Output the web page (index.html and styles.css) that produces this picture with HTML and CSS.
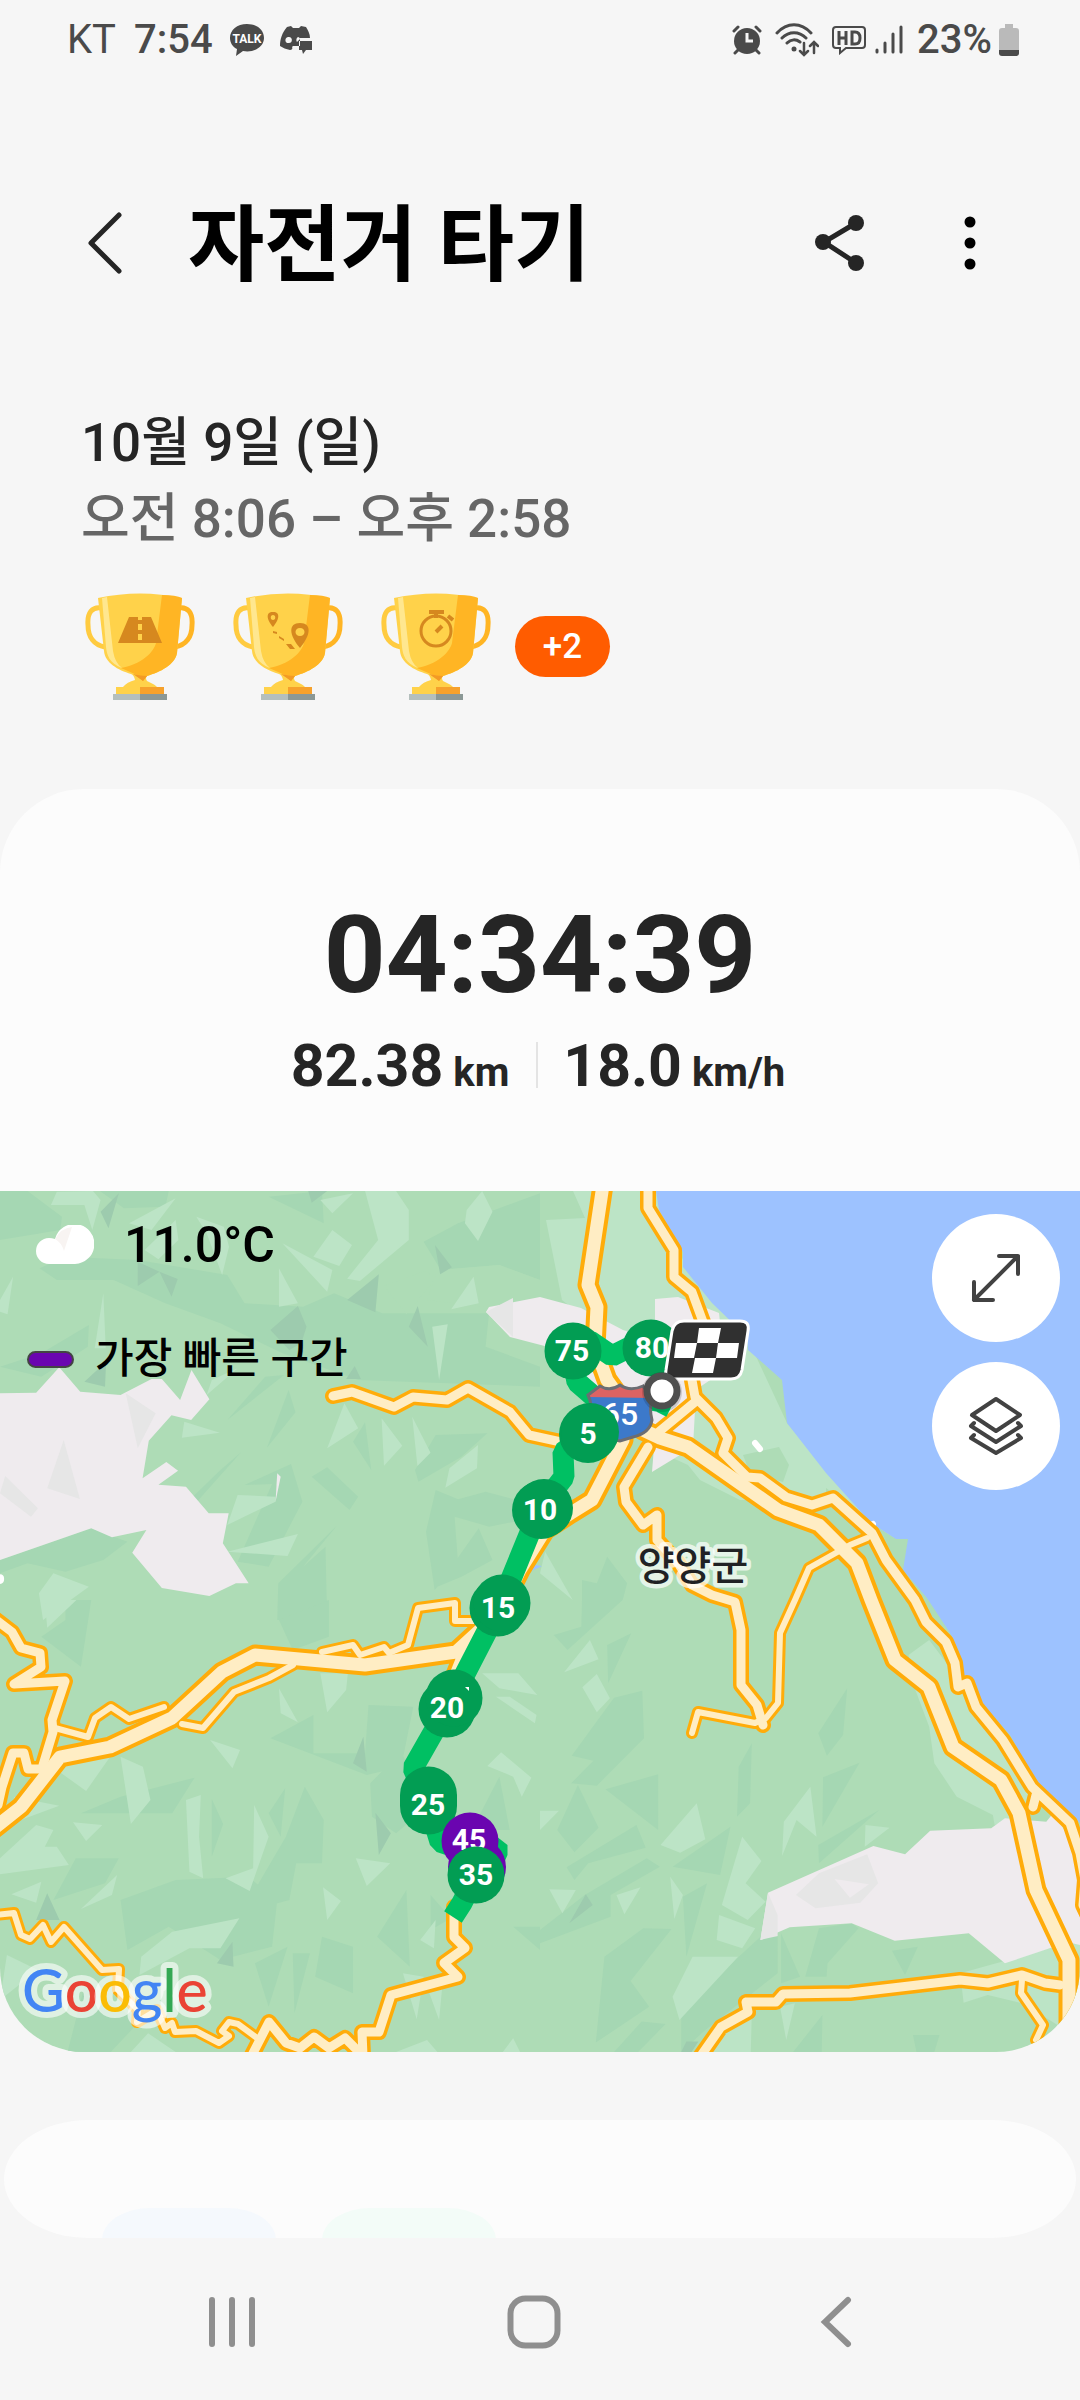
FILE: index.html
```html
<!DOCTYPE html>
<html lang="ko">
<head>
<meta charset="utf-8">
<meta name="viewport" content="width=device-width, initial-scale=1">
<title>자전거 타기</title>
<link rel="stylesheet" href="styles.css">
</head>
<body>
<div class="status">
  <div class="status-side">
    <span class="carrier">KT</span>
    <span class="clock">7:54</span>
    <svg class="talk" width="36" height="33" viewBox="0 0 36 33"><path fill="#4a4a4a" d="M18 0C8 0 1 6 1 14c0 5 3 9 7 11l-1 7 7-5c11 2 21-4 21-13C35 6 28 0 18 0z"/><text x="18" y="19" class="talk-text">TALK</text></svg>
    <svg width="34" height="30" viewBox="0 0 34 30"><path fill="#4a4a4a" fill-rule="evenodd" d="M8 2l4-1 2 2h6l2-2 5 1c2 3 4 7 4 11H21v8h-7l-1 1c1 1 0 3-2 3-4-1-7-2-10-4C1 14 3 8 8 2zM9 12c-4 1-3 7 1 6 4 0 4-7-1-6zm10 0c-2 1-2 4-1 5l3-3c0-1-1-2-2-2zM20 16h13v9h-6l-3 4-1-4h-3z"/></svg>
  </div>
  <div class="status-side status-right">
    <svg width="30" height="30" viewBox="0 0 30 30"><circle cx="15" cy="16" r="13" fill="#4a4a4a"/><path fill="none" stroke="#4a4a4a" stroke-width="3" stroke-linecap="round" d="M2 6l4-4M28 6l-4-4M6 25l-3 3M24 25l3 3"/><path fill="none" stroke="#f6f6f6" stroke-width="3" d="M15 8v8h6"/></svg>
    <svg class="wifi" width="44" height="34" viewBox="0 0 44 34"><g fill="none" stroke="#4a4a4a" stroke-width="3" stroke-linecap="round"><path d="M2 10C12-1 26-1 36 10M7 15c7-7 17-7 24 0M12 20c4-4 9-4 13-1"/><path d="M29 20v11M25 28l4 4 4-4M39 30V20M35 23l4-4 4 4" stroke-width="2.500"/></g><circle cx="19" cy="26" r="2.500" fill="#4a4a4a"/></svg>
    <svg class="hd" width="36" height="30" viewBox="0 0 36 30"><path fill="none" stroke="#4a4a4a" stroke-width="2" d="M5 2h26q3 0 3 3v15q0 3-3 3H15l-6 5v-5H5q-3 0-3-3V5q0-3 3-3z"/><path fill="none" stroke="#4a4a4a" stroke-width="3" d="M8 6v14M8 13h6M15 6v14M21 7v12h3q5 0 5-6t-5-6z"/></svg>
    <svg class="signal" width="28" height="30" viewBox="0 0 28 30"><path stroke="#4a4a4a" stroke-width="3" stroke-linecap="round" d="M2 25v2M10 18v9M18 9v18M26 2v25"/></svg>
    <span class="clock">23%</span>
    <svg class="battery" width="22" height="32" viewBox="0 0 22 32"><path fill="#bababa" d="M7 0h8v4h3q3 0 3 3v21q0 3-3 3H4q-3 0-3-3V7q0-3 3-3h3z"/><path fill="#4a4a4a" d="M1 26h20v3q0 3-3 3H4q-3 0-3-3z"/></svg>
  </div>
</div>

<header class="header">
  <button class="icon-button" aria-label="뒤로"><svg width="40" height="64" viewBox="0 0 40 64"><path fill="none" stroke="#252525" stroke-width="5" stroke-linecap="round" stroke-linejoin="round" d="M35 4L7 32l28 28"/></svg></button>
  <h1>자전거 타기</h1>
  <button class="icon-button share" aria-label="공유"><svg width="52" height="60" viewBox="0 0 52 60"><path fill="none" stroke="#252525" stroke-width="5" d="M42 10L10 29l32 21"/><g fill="#252525"><circle cx="42" cy="10" r="8"/><circle cx="9" cy="29" r="8"/><circle cx="42" cy="50" r="8"/></g></svg></button>
  <button class="icon-button more" aria-label="더보기"><svg width="12" height="56" viewBox="0 0 12 56"><circle cx="6" cy="7" r="5.500"/><circle cx="6" cy="28" r="5.500"/><circle cx="6" cy="49" r="5.500"/></svg></button>
</header>

<main>
  <section class="summary">
    <p class="date">10월 9일 (일)</p>
    <p class="hours">오전 8:06 – 오후 2:58</p>
    <div class="awards">
      <svg width="0" height="0" class="defs"><defs>
        <g id="cup">
          <path fill="none" stroke="#ffcb40" stroke-width="5" d="M17 15C7 13 2 20 3 32c0 12 6 20 17 22"/>
          <path fill="none" stroke="#ffb524" stroke-width="5" d="M93 15c10-2 15 5 14 17 0 12-6 20-17 22"/>
          <path fill="#ffd24a" d="M13 5q42-9 84 0l-5 55C90 72 75 79 62 83q-2 2 0 5 9 4 10 6H38q4-5 12-7-1-5-4-6C33 77 20 70 19 58z"/>
          <path fill="#ffb524" d="M77 2q14 0 20 3l-5 55C90 72 75 79 62 83l-4 5-6-6-16-7C62 70 70 55 71 50z"/>
          <path fill="#ffe78f" d="M17 5l5-1 6 54q2 12 9 17C24 70 22 62 21 54z"/>
          <path fill="#f39a25" d="M48 81q8 2 14 2l-4 5z"/>
          <path fill="#ffd24a" d="M31 94h24v8H31z"/><path fill="#f6a12c" d="M55 94h24v8H55z"/>
          <path fill="#b4bfbd" d="M28 101h27v6H28z"/><path fill="#8b9896" d="M55 101h27v6H55z"/>
        </g>
      </defs></svg>
      <svg class="cup" width="110" height="107" viewBox="0 0 110 107"><use href="#cup"/><path fill="#d6881f" d="M44 24h9v3h4v-3h9l11 26H33zM53 31h4v6h-4zM53 41h4v6h-4z" fill-rule="evenodd"/></svg>
      <svg class="cup" width="110" height="107" viewBox="0 0 110 107"><use href="#cup"/><g fill="#d6881f"><path fill-rule="evenodd" d="M40 19c-8 0-6 8 0 15 6-7 8-15 0-15zM40 22c3 0 3 5 0 5s-3-5 0-5zM67 30c-12 0-11 12 0 25 11-13 12-25 0-25zM67 35c6 0 6 8 0 8s-6-8 0-8z"/><path d="M40 38l4 1v2l-4-1zM46 43l5 3v2l-5-3zM53 51h5l4 5h-5z"/></g></svg>
      <svg class="cup" width="110" height="107" viewBox="0 0 110 107"><use href="#cup"/><g fill="none" stroke="#d6881f"><circle cx="55" cy="38" r="15" stroke-width="3"/><path stroke-width="4" d="M48 19h15M55 20v5M67 23l5 4M55 39l6-6"/></g></svg>
      <button class="more-awards">+2</button>
    </div>
  </section>

  <section class="workout">
    <div class="totals">
      <p class="duration">04:34:39</p>
      <div class="stats">
        <p>82.38<small>km</small></p>
        <p>18.0<small>km/h</small></p>
      </div>
    </div>
    <div class="map">
      <svg class="map-canvas" viewBox="0 1191 1080 861" role="img" aria-label="경로 지도">
        <rect y="1191" width="1080" height="861" fill="#aedcb6"/>
        <!-- terrain, north-west -->
        <g transform="translate(0 1180) scale(.3444 .3333)">
          <path fill="#a5d7b3" d="M0 33H80L180 110 175 150 0 180zM115 265L190 230 400 240 660 285 710 370 880 380 970 340 1110 400H1420L1410 500 1568 560V620L1040 600 820 520 640 430 480 370 330 300H165zM1330 130L1568 40V300L1450 255 1280 270 1230 185zM780 50L935 33 940 130zM290 33H490L480 80 360 85zM825 585L770 590 660 720zM838 630L858 697 775 803zM700 817L555 985 560 950 640 870zM845 852L878 965 780 1160 690 1145 790 912 710 915zM950 862L1040 950 1015 990 905 890zM1060 727L1078 870 1025 785zM1265 930L1330 958 1410 935 1568 980V1010L1420 1040 1320 1010 1330 1150 1262 1230 1237 1055zM1415 760L1340 830 1215 905 1205 870 1265 765zM978 1037L880 1160 945 1100 950 1320H805L808 1210zM0 1140L265 1045 370 1085 300 1140 190 1175 80 1150 0 1180zM0 560L120 520 258 435 255 500 120 590zM1390 1045L1430 1140 1340 1190 1270 1220z"/>
          <path fill="#aedcb6" d="M1115 318L1235 272 1265 295 1180 403zM1270 270L1450 255 1568 300V400L1240 360z"/>
          <path fill="#bce4c6" d="M1060 33H1150L1187 90V180L1045 303 1008 296 1098 180zM148 75L165 35 270 33 292 60 268 150 245 75zM375 130L510 55 440 150zM570 110L650 140 665 200 645 285 600 160zM820 190L965 270 950 335zM965 150L1022 195 985 258 910 230zM930 60L1025 40 965 100zM810 265L865 370 810 380zM1400 33L1430 95 1388 183 1350 130 1355 90zM1375 290L1390 370 1310 388zM300 340L307 505H275zM38 290L22 403 0 395V360zM420 210L510 120 518 180 460 238zM1000 670L1040 745 950 805zM1108 715L1168 797 1115 857zM1197 710L1250 818 1212 858zM1388 795L1385 865 1293 923 1305 865zM535 725L638 758 528 773zM690 945L800 950V965L660 1035zM865 1062L835 1128 660 1115zM155 1180L258 1220 125 1320 113 1240zM690 565L600 645 615 600zM1300 433L1275 600 1255 440z"/>
          <path fill="#9dcbae" d="M345 40L315 145 292 95zM400 245L463 275 400 318zM463 275L516 297 498 350zM865 378L890 440 875 490 840 510 785 450zM1100 283L1090 397 1008 360zM1263 195L1312 262 1278 283zM1213 378L1242 500 1187 440zM308 545L305 620 245 605zM1030 558L1048 597H1005zM895 33H950L905 68z"/>
          <path fill="#efebee" d="M0 640L105 638 172 562 233 635 350 645 440 597H470L523 660 556 570 608 658 555 720 498 706 432 782 414 895 483 846 517 872 460 914 540 920 606 1000H664L647 1090 722 1210H685L608 1248 470 1224 384 1118 425 1050 325 1072 265 1045 0 1140z"/>
          <path fill="#e6e6e6" d="M365 640L452 700 400 805zM185 780L232 957 137 925zM15 888L110 985 90 1010 0 940z"/>
          <path fill="#efebee" d="M805 880L815 890 800 965z"/>
          <path fill="#fff" d="M0 1183q12 0 12 14T0 1212z"/>
        </g>
        <!-- terrain, south-west -->
        <g transform="translate(0 1600) scale(.3444 .3333)">
          <path fill="#a5d7b3" d="M120 110L190 60V0H265L235 200zM785 415L910 345V460H1060L1070 315 1200 320 1165 500 1065 525zM350 590L565 533 500 640H235zM220 775H345L305 850 155 900zM510 840L720 830 805 900 790 1040 640 1080 490 980 370 1050 350 900zM885 560L940 660 935 790H860L840 900 700 940 830 710zM780 640L828 565 815 710zM615 597L648 672 615 770zM1180 870L1095 1010 1190 1100zM1250 885L1310 955 1250 990zM1450 530L1480 690H1370zM935 1010L1025 1040V1180L915 1130zM740 1090L835 1040 780 1220zM850 1060H900L855 1240zM190 1380L250 1140 400 1270 300 1380zM1075 550L1165 455 1240 620 1150 700 1080 650zM810 60L955 0V110L850 150zM1490 980H1568V1050z"/>
          <path fill="#bce4c6" d="M350 470L415 500 437 600 380 672zM540 600L583 585 578 710 590 835 550 815zM738 615L780 710 725 873 655 835 735 805zM212 667L297 675 250 723zM610 420L697 450 675 505zM810 265L865 367 815 340zM930 220H1010L1005 270 950 337zM1033 775L1133 790 1065 858zM938 862L990 903 950 960zM1455 457L1543 533 1515 590 1490 530 1415 498zM1400 220H1505L1560 285 1450 265zM1440 290H1480L1558 345 1553 370zM695 955L640 1045H550L405 1125 410 1070 500 995zM165 510L300 455H330L250 573zM40 590L172 617 60 660zM0 775L105 675 155 690 130 740H165L200 795 0 823zM120 845L105 908 33 883zM340 825L325 885 235 927zM1265 960L1260 1045 1220 1020zM1170 1120L1230 1130 1210 1258zM1240 1160L1285 1150 1275 1260zM130 0H222L137 83zM20 1065L110 1110 0 1200zM1150 1356L1240 1320 1270 1356zM1490 1315L1510 1356H1460zM430 1300L510 1356H380z"/>
          <path fill="#9dcbae" d="M1055 410L1065 515 1025 490zM1090 638L1135 700 1100 765zM137 880L173 960H105zM675 1025L678 1100 630 1090z"/>
        </g>
        <!-- terrain, south-east -->
        <g transform="translate(540 1600) scale(.3444 .3333)">
          <path fill="#a5d7b3" d="M215 293L297 272 302 415 165 557 90 550 155 482 92 467zM110 555L170 683 100 757 50 690zM190 568L343 523V690zM280 675L307 743 140 790 100 840 77 802zM553 680L523 825 385 800zM310 775L348 800 205 885V950L0 1030V990L130 885zM485 850L425 1070 415 890zM892 265L880 405 833 467 808 400zM928 488L820 680 822 532zM615 430L610 610 572 650 577 500zM985 630L810 790 808 735zM300 985L382 987 263 1143 317 1220 162 1328 187 1070zM905 970L925 985 835 1090 832 1130H770L810 985zM700 1000L755 1130 700 1150zM1022 1052L1097 1040 1060 1125zM265 100L198 250 195 135zM40 105L120 80 122 0 122-60 165-50 195-130 253-50 240 0 80 150zM410 1230L640 1010H690V1120L480 1290 410 1356zM820 1245L818 1356H735zM1083 1305H1160L1145 1356H1093zM295 1265L365 1272 285 1356H215z"/>
          <path fill="#bce4c6" d="M145 120L170 178 70 217zM165 222L203 295 165 337 123 262zM455 610L480 718 407 758 350 735zM785 560L803 710 745 660 703 768 708 665zM945 675L1015 683 943 740zM587 710L643 783 597 850 655 905 603 960 528 915zM520 945L625 985 587 1045 513 1020zM27 868L104 870 65 940zM292 862L245 943 222 885zM378 830L415 885 390 957zM443 1070H575L405 1260 385 1190zM0 632H55L0 690zM697 1220L740 1210 715 1320zM530 1300L615 1240 612 1356H500zM1070 165L1130 120 1210 230 1350 450 1430 570 1400 650 1320 675 1315 645 1210 590 1145 490 1130 380 1090 270zM1220 1120L1480 1045 1568 1030V1356H1510V1280L1400 1210 1300 1185 1230 1208zM15-145L95 0 0-80z"/>
          <path fill="#9dcbae" d="M133 883L153 915 85 970zM425 1325H460L440 1356H410z"/>
          <path fill="#efebee" d="M662 878L968 738 1060 763 1133 692 1310 685 1350 655 1470 665 1490 640 1568 760V1035L1545 1030 1480 1045 1350 1090 1245 1000 1030 1022 905 970 725 982 640 1020z"/>
          <path fill="#e6e6e6" fill-rule="evenodd" d="M810 820L950 763 982 850 930 908 800 925 743 885zM855 837L955 853 900 893zM662 878L690 945V1008L640 1020z"/>
        </g>
        <!-- coast, town and sea -->
        <path fill="#bce4c6" d="M573 1191H656L683 1260 747 1337 787 1423 871 1523 896 1539 826 1488V1500L740 1500 700 1480 688 1465 655 1450 640 1400 600 1330 562 1300 546 1220 585 1218z"/>
        <path fill="#aedcb6" d="M743 1455L779 1447 789 1465 783 1482 750 1473z"/>
        <path fill="#efebee" d="M486 1312L489 1307 540 1297 581 1308 623 1330 655 1340V1299L678 1297 719 1313 725 1370 691 1393 695 1410 693 1447 652 1472 654 1447 600 1400 560 1350 510 1337z"/>
        <path fill="#e6e6e6" d="M486 1312L513 1298V1337z"/>
        <path fill="#9dc2ff" d="M656 1191L659 1210 683 1252V1267L712 1303 747 1337 748 1350 782 1380 787 1423 826 1473 871 1523 896 1539H908L903 1570 927 1598 950 1633 960 1655 964 1680 985 1707 1010 1735 1035 1780 1075 1818 1080 1823V1191zM527 1564L542 1566 523 1575z"/>
        <path stroke="#fff" stroke-width="6" stroke-linecap="round" d="M755 1443l5 6M869 1527l4-3"/>
        <!-- roads: casings first, then fills -->
        <defs>
          <g id="minor">
            <path d="M867 1538L850 1545 809 1568 795 1600 780 1633 778 1703 766 1718 755 1723 698 1712 692 1733"/>
            <path d="M1022 1980L1021 1993 1043 2025 1036 2040"/>
            <path d="M55 1728L88 1737 95 1718 111 1707 129 1719 164 1707"/>
            <path d="M182 1724L203 1728 234 1692 269 1678 293 1665"/>
            <path d="M322 1652L353 1645 360 1655 384 1647 389 1653 408 1645 418 1608 455 1603V1621H475"/>
            <path d="M-5 1915L14 1913 21 1935 30 1939 43 1925 51 1942 64 1927 102 1970 119 1969 118 1990 138 2010 137 2022 157 2010 165 2028 172 2023 175 2032 196 2031 219 2043 229 2036 222 2031 229 2022 238 2024 257 2038"/>
          </g>
          <g id="local">
            <path d="M333 1396L352 1392 394 1407 413 1397 447 1400 468 1388 510 1412 529 1435 561 1442 600 1445"/>
            <path d="M648 1185V1208L674 1250V1277L692 1292 706 1330 692 1380 695 1397 716 1418 728 1438 723 1453 747 1477 760 1478 786 1497 812 1505 833 1498 872 1533 886 1560 915 1600 926 1622 946 1642 955 1663 958 1687 967 1683 976 1707 1003 1740 1032 1787 1070 1823 1080 1853 1085 1880 1083 1905 1090 1920M1036 1795L1033 1807"/>
            <path d="M695 1402L655 1435M648 1447L624 1487 626 1502 643 1525 657 1515V1540L678 1563 692 1585 712 1595 735 1602 741 1630V1685L757 1705 763 1725"/>
            <path d="M700 2057L721 2027 748 2012 746 2002H776L783 1994 850 1993 960 1980 988 1983 1022 1975 1045 1983 1060 1985"/>
            <path d="M-5 1619L12 1632 21 1648 40 1653 41 1667 14 1684 65 1681 52 1720 53 1732 43 1765M-2 1805L2 1787 13 1753H24L28 1769H40"/>
            <path d="M251 2057L269 2022 286 2043 300 2048 314 2037 329 2048 345 2038 363 2056 362 2032H379L391 1995 458 1977 444 1963 465 1948 454 1937V1907"/>
          </g>
          <g id="trunk">
            <path d="M603 1185L588 1285 597 1307 595 1347 607 1380 643 1430 660 1438 688 1447 778 1510 819 1525 857 1563 871 1600 895 1660 929 1687 953 1747 1001 1780 1019 1813 1036 1890 1069 1960V2060"/>
            <path d="M623 1440L592 1500 571 1513 545 1530 520 1570 505 1600 480 1630 456 1652 365 1665 255 1655 222 1672 172 1718 110 1747 60 1757 21 1807 -8 1830M450 1690L470 1640"/>
          </g>
        </defs>
        <g fill="none" stroke-linejoin="round" stroke-linecap="round">
          <g stroke="#ffac0a"><use href="#minor" stroke-width="12"/><use href="#local" stroke-width="16"/><use href="#trunk" stroke-width="21"/></g>
          <g stroke="#ffedc4"><use href="#minor" stroke-width="6"/><use href="#local" stroke-width="9"/><use href="#trunk" stroke-width="13"/></g>
        </g>
        <text x="693" y="1580" class="town">양양군</text>
        <!-- ridden route -->
        <path fill="none" stroke="#00c063" stroke-width="21" stroke-linejoin="bevel" d="M573 1340L590 1341 612 1356 630 1347 651 1347M573 1360L577 1382 592 1395 625 1412 638 1398 662 1402 657 1412M588 1433L563 1452 564 1477 540 1508 500 1606 450 1703 413 1768 428 1803 440 1842 470 1852 497 1845 497 1855 476 1875 462 1903 453 1917"/>
        <!-- highway shield -->
        <path fill="#3c79ca" d="M588 1395L600 1386Q610 1392 620 1385 630 1392 643 1386L652 1400Q649 1408 652 1420 650 1433 633 1437L620 1441Q592 1436 590 1420 593 1405 588 1395z"/>
        <path fill="#dc6363" d="M588 1397L600 1386Q610 1392 620 1385 630 1392 643 1386L651 1398z"/>
        <path fill="none" stroke="#6b6d73" stroke-width="3" d="M588 1395L600 1386Q610 1392 620 1385 630 1392 643 1386L652 1400Q649 1408 652 1420 650 1433 633 1437L620 1441Q592 1436 590 1420 593 1405 588 1395z"/>
        <text x="620" y="1425" class="shield">65</text>
        <!-- distance markers -->
        <g fill="#029d53">
          <circle cx="573" cy="1351" r="28.500"/><circle cx="651" cy="1348" r="28.500"/>
          <circle cx="588" cy="1434" r="29"/><circle cx="590" cy="1432" r="29"/>
          <circle cx="541" cy="1510" r="29"/><circle cx="544" cy="1508" r="29"/>
          <circle cx="498" cy="1608" r="28.500"/><circle cx="502" cy="1603" r="28.500"/>
          <circle cx="447" cy="1709" r="28.500"/><circle cx="454" cy="1698" r="28.500"/>
          <path d="M400 1795a28.500 28.500 0 0 1 57 0v11a28.500 28.500 0 0 1-57 0z"/>
        </g>
        <path fill="#fff" d="M465 1687h4v4z"/>
        <g fill="#6a05b0"><circle cx="477" cy="1867" r="29"/><circle cx="470" cy="1841" r="28.500"/></g>
        <g class="marker">
          <text x="572" y="1361">75</text><text x="652" y="1358">80</text><text x="588" y="1444">5</text>
          <text x="540" y="1520">10</text><text x="498" y="1618">15</text><text x="447" y="1718">20</text>
          <text x="428" y="1815">25</text><text x="469" y="1850">45</text>
        </g>
        <circle cx="476" cy="1875" r="28.500" fill="#029d53"/>
        <g class="marker"><text x="476" y="1885">35</text></g>
        <path fill="#303030" stroke="#fff" stroke-width="3" d="M684 1321H740Q750 1321 748 1331L742 1370Q740 1379 731 1379H674Q664 1379 666 1370L672 1331Q674 1321 684 1321z"/>
        <path fill="#fff" d="M699 1328H721L718 1343H739L737 1358H716L713 1373H692L695 1358H674L676 1343H697z"/>
        <path fill="#303030" d="M697 1343H718L716 1358H694z"/>
        <circle cx="662" cy="1392" r="20" fill="#000" opacity=".15"/>
        <circle cx="662" cy="1391" r="15" fill="#fff" stroke="#4f4f4f" stroke-width="7"/>
        <text x="22" y="2012" class="brand"><tspan fill="#4285f4">G</tspan><tspan fill="#ea4335">o</tspan><tspan fill="#fbbc05">o</tspan><tspan fill="#4285f4">g</tspan><tspan fill="#34a853">l</tspan><tspan fill="#ea4335">e</tspan></text>
      </svg>
      <div class="map-info">
        <p class="weather"><svg width="58" height="40" viewBox="0 0 58 40"><path fill="#fff" d="M13 39a13 13 0 0 1 0-26q3 0 6 1a20 20 0 1 1 20 25z"/><path fill="#f8f4f2" d="M19 14q6-11 17-12-4 12-8 24-2-8-9-12z"/></svg>11.0°C</p>
        <p class="legend"><span class="swatch"></span>가장 빠른 구간</p>
      </div>
      <div class="map-tools">
        <button aria-label="지도 확대"><svg width="52" height="52" viewBox="0 0 52 52"><path d="M4 48L48 4M29 4h19v18M4 30v18h19"/></svg></button>
        <button aria-label="지도 유형"><svg width="56" height="60" viewBox="0 0 56 60"><path d="M28 3l24 16-24 16L4 19zM6 27l-3 3 25 16 25-16-3-3M6 39l-3 3 25 15 25-15-3-3"/></svg></button>
      </div>
    </div>
  </section>

  <section class="details"><span class="tile blue"></span><span class="tile mint"></span></section>
</main>

<nav class="system-nav">
  <button aria-label="최근 앱"><svg width="50" height="52" viewBox="0 0 50 52"><path stroke="#8f8f8f" stroke-width="6" stroke-linecap="round" d="M5 4v44M25 4v44M45 4v44"/></svg></button>
  <button aria-label="홈"><svg width="54" height="54" viewBox="0 0 54 54"><rect x="3.500" y="3.500" width="47" height="47" rx="15" fill="none" stroke="#8f8f8f" stroke-width="6"/></svg></button>
  <button aria-label="뒤로"><svg width="32" height="52" viewBox="0 0 32 52"><path fill="none" stroke="#8f8f8f" stroke-width="6" stroke-linecap="round" d="M28 4L5 26l23 22"/></svg></button>
</nav>
</body>
</html>
```
FILE: styles.css
```css
* { box-sizing: border-box; }
body {
  margin: 0;
  background: #f6f6f6;
  color: #252525;
  font-family: Roboto, "Noto Sans CJK KR", sans-serif;
}
h1, p { margin: 0; }
svg { display: block; flex: none; }
button {
  display: flex;
  align-items: center;
  justify-content: center;
  padding: 0;
  border: 0;
  background: none;
  color: inherit;
  font: inherit;
}

.status {
  display: flex;
  justify-content: space-between;
  height: 80px;
  padding: 0 60px 0 67px;
  color: #4a4a4a;
  font-size: 40px;
  line-height: 80px;
}
.status-side { display: flex; align-items: center; }
.carrier { margin-right: 18px; font-weight: 400; }
.clock { font-weight: 500; }
.talk { margin: 0 14px 0 16px; }
.talk-text { fill: #fff; font-size: 12px; font-weight: 700; text-anchor: middle; }
.wifi { margin-left: 13px; }
.hd { margin-left: 12px; }
.signal { margin: 0 14px 0 8px; }
.battery { margin-left: 6px; }

.header {
  display: flex;
  align-items: center;
  height: 325px;
  padding: 0 104px 0 84px;
}
.header h1 {
  flex: 1;
  margin-left: 64px;
  padding-top: 6px;
  color: #000;
  font-size: 83px;
  font-weight: 700;
  line-height: 100px;
}
.more { margin-left: 98px; }

.summary { padding: 0 81px 89px; }
.date, .hours { font-size: 53px; font-weight: 500; line-height: 76px; }
.hours { color: #666; }
.awards { display: flex; align-items: center; margin-top: 36px; padding-left: 4px; }
.defs { position: absolute; }
.cup { margin-right: 38px; }
.more-awards {
  width: 95px;
  height: 61px;
  margin-left: -14px;
  border-radius: 31px;
  background: #ff5c00;
  color: #fff;
  font-size: 35px;
  font-weight: 500;
}

.workout {
  overflow: hidden;
  border-radius: 84px;
  background: #fcfcfc;
}
.totals { padding: 106px 0 93px; text-align: center; }
.duration { font-size: 108px; font-weight: 700; line-height: 120px; }
.stats {
  display: flex;
  justify-content: center;
  margin-top: 19px;
  padding-right: 4px;
  font-size: 59px;
  font-weight: 700;
  line-height: 64px;
}
.stats p { padding: 0 27px; }
.stats p + p { position: relative; }
.stats p + p::before {
  position: absolute;
  top: 8px;
  bottom: 10px;
  left: 0;
  width: 2px;
  background: #e4e4e4;
  content: "";
}
.stats small { margin-left: 10px; font-size: 40px; line-height: 1; }

.map { position: relative; }
.map-canvas { width: 100%; height: auto; }
.marker { fill: #fff; font-size: 30px; font-weight: 700; text-anchor: middle; }
.shield { fill: #fff; font-size: 32px; font-weight: 500; text-anchor: middle; }
.town {
  fill: #202124;
  stroke: rgba(255, 255, 255, .7);
  stroke-width: 9px;
  stroke-linejoin: round;
  paint-order: stroke;
  font-size: 40px;
  font-weight: 500;
  text-anchor: middle;
}
.brand {
  stroke: rgba(255, 255, 255, .6);
  stroke-width: 12px;
  stroke-linejoin: round;
  paint-order: stroke;
  font-family: Lato, sans-serif;
  font-size: 59px;
  font-weight: 500;
}
.map-info { position: absolute; top: 16px; left: 27px; color: #000; font-weight: 500; }
.weather { display: flex; align-items: center; gap: 30px; padding-left: 9px; font-size: 50px; line-height: 76px; }
.legend { display: flex; align-items: center; gap: 21px; margin-top: 46px; font-size: 42px; line-height: 60px; }
.swatch { width: 47px; height: 17px; border: 2px solid #444; border-radius: 9px; background: #6a05b0; }
.map-tools { position: absolute; top: 23px; right: 20px; display: grid; gap: 20px; }
.map-tools button { width: 128px; height: 128px; border-radius: 50%; background: #fff; }
.map-tools path { fill: none; stroke: #424242; stroke-width: 4; stroke-linecap: round; stroke-linejoin: round; }

.details {
  display: flex;
  gap: 46px;
  height: 118px;
  margin: 68px 4px 0;
  padding: 88px 98px 0;
  overflow: hidden;
  border-radius: 84px / 59px;
  background: #fcfcfc;
}
.tile { width: 174px; height: 80px; border-radius: 48px 48px 0 0 / 32px 32px 0 0; }
.blue { background: #f5f9fd; }
.mint { background: #f3fcf8; }

.system-nav { display: flex; justify-content: center; padding: 57px 12px 49px 0; }
.system-nav button { width: 28vw; height: 54px; }
```
